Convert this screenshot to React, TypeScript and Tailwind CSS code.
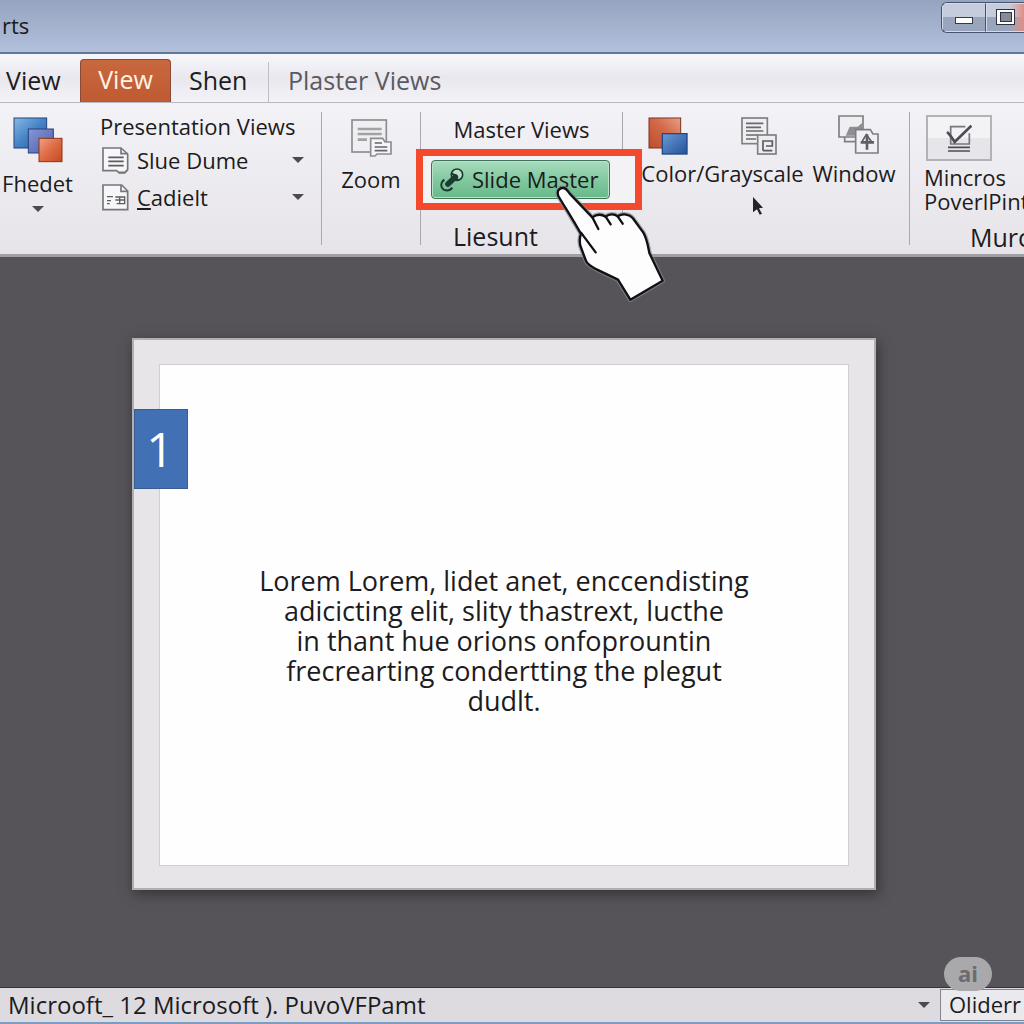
import React, { useState } from 'react';

const Caret = ({ className = '' }: { className?: string }) => (
  <svg viewBox="0 0 12 8" className={`h-2 w-3 shrink-0 ${className}`} aria-hidden="true">
    <path d="M0 1h12L6 7z" fill="#4b4a50" />
  </svg>
);

const Divider = () => <div className="my-[9px] w-px shrink-0 bg-[#a9a8ae]" />;

const SquaresIcon = () => (
  <svg viewBox="0 0 150 138" className="h-[46px] w-[50px]" aria-hidden="true">
    <defs>
      <linearGradient id="blue" x1="0" y1="0" x2="1" y2="1">
        <stop offset="0" stopColor="#8ab8e4" />
        <stop offset="0.5" stopColor="#4583c6" />
        <stop offset="1" stopColor="#235aa2" />
      </linearGradient>
      <linearGradient id="violet" x1="0" y1="0" x2="1" y2="1">
        <stop offset="0" stopColor="#8798d6" />
        <stop offset="1" stopColor="#4a5cab" />
      </linearGradient>
      <linearGradient id="orange" x1="0" y1="0" x2="1" y2="1">
        <stop offset="0" stopColor="#f0a182" />
        <stop offset="0.5" stopColor="#de6b45" />
        <stop offset="1" stopColor="#c24a22" />
      </linearGradient>
    </defs>
    <rect x="3" y="3" width="98" height="90" fill="url(#blue)" stroke="#1f4478" strokeWidth="3" />
    <rect x="46" y="36" width="75" height="72" fill="url(#violet)" stroke="#2b3f78" strokeWidth="3" />
    <rect x="78" y="64" width="69" height="70" fill="url(#orange)" stroke="#8c3418" strokeWidth="3" />
  </svg>
);

const PageIcon = ({ framed }: { framed?: boolean }) => (
  <svg viewBox="0 0 81 81" className="h-[27px] w-[27px] shrink-0" fill="none" stroke="#77767c" strokeWidth="5" aria-hidden="true">
    {framed ? (
      <>
        <path d="M3 3h56l18 18v56H3z" fill="#f7f7f9" />
        <path d="M57 3v19h20" />
        <path d="M15 38h18M15 50h12M15 59h8M40 39h28v20H44M40 48h28M53 39v20" stroke="#5e5d63" strokeWidth="4" />
      </>
    ) : (
      <>
        <path d="M3 3h54l20 18v47l-7 8H50l-6-5H3z" fill="#f7f7f9" />
        <path d="M57 3v17h20M50 78h17l9-9" />
        <path d="M19 31h46M19 43h46M19 56h46" stroke="#5e5d63" />
      </>
    )}
  </svg>
);

const ZoomIcon = () => (
  <svg viewBox="0 0 123 114" className="h-[38px] w-[41px]" fill="none" stroke="#8d8c92" strokeWidth="5" aria-hidden="true">
    <rect x="3" y="3" width="103" height="96" fill="#efeff1" />
    <path d="M20 30h72M20 45h72M20 62h28" strokeWidth="8" stroke="#a2a1a6" />
    <path d="M59 58h36l7 11h18v36H78l-6 6H59z" fill="#f5f5f7" />
    <path d="M71 72h22M71 84h38M71 95h38" stroke="#66656b" />
  </svg>
);

const ColorIcon = () => (
  <svg viewBox="0 0 120 114" className="h-[38px] w-10" aria-hidden="true">
    <defs>
      <linearGradient id="rust" x1="0" y1="1" x2="1" y2="0">
        <stop offset="0" stopColor="#bd4d2c" />
        <stop offset="0.55" stopColor="#d2694a" />
        <stop offset="1" stopColor="#eaa086" />
      </linearGradient>
      <linearGradient id="steel" x1="0" y1="0" x2="1" y2="1">
        <stop offset="0" stopColor="#6c9bd8" />
        <stop offset="1" stopColor="#235199" />
      </linearGradient>
    </defs>
    <rect x="3" y="3" width="95" height="90" fill="url(#rust)" stroke="#7c3220" strokeWidth="3" />
    <rect x="43" y="50" width="74" height="61" fill="url(#steel)" stroke="#214984" strokeWidth="4" />
  </svg>
);

const GrayscaleIcon = () => (
  <svg viewBox="0 0 108 114" className="h-[38px] w-9" fill="none" stroke="#7f7e84" strokeWidth="5" aria-hidden="true">
    <rect x="3" y="3" width="76" height="77" fill="#efeff1" />
    <path d="M15 19h52M15 31h45M15 42h52M15 54h38M15 66h30" stroke="#6a696f" />
    <rect x="50" y="54" width="55" height="57" fill="#ededf0" />
    <path d="M66 101V72h28v15H75M66 101h28" stroke="#5b5a60" />
  </svg>
);

const WindowIcon = () => (
  <svg viewBox="0 0 123 117" className="h-[39px] w-[41px]" fill="none" stroke="#7f7e84" strokeWidth="5" aria-hidden="true">
    <path d="M20 66v14h34M3 3h72v63H3z" fill="#efeff1" />
    <path d="M23 62l12-27h24l14-12v39z" fill="#8f8e94" stroke="none" />
    <path d="M53 44h44l8 13h15v57H53z" fill="#f0f0f2" />
    <path d="M87 104V58M68 82h40" stroke="#5f5e64" strokeWidth="8" />
    <path d="M73 78l12-19 17 23" stroke="#5f5e64" />
  </svg>
);

const CheckIcon = () => (
  <svg viewBox="0 0 78 84" className="h-7 w-[26px]" fill="none" stroke="#4d4c52" strokeWidth="5" aria-hidden="true">
    <path d="M58 8H14v52h56V28" stroke="#77767c" />
    <path d="M3 24c8 6 14 16 23 30L76 5" strokeWidth="8" />
    <path d="M6 70h66M6 81h66" />
  </svg>
);

const KeyIcon = () => (
  <svg viewBox="0 0 72 72" className="h-6 w-6 shrink-0" fill="none" stroke="#1d3b30" strokeWidth="5" aria-hidden="true">
    <circle cx="51" cy="20" r="17" fill="#b9e2cb" />
    <path d="M46 27L24 48" strokeWidth="17" strokeLinecap="round" />
    <path d="M33 16c4 4 12 2 14 8s4 11 8 12" strokeWidth="6" />
    <path d="M13 35C1 44 1 59 11 65c11 5 20 2 26-6" strokeWidth="6" />
  </svg>
);

const HandPointer = () => (
  <svg
    viewBox="702 252 336 366"
    className="pointer-events-none absolute left-[131px] top-[28px] h-[122px] w-28"
    stroke="#111014"
    strokeWidth="7"
    strokeLinecap="round"
    strokeLinejoin="round"
    aria-hidden="true"
  >
    <path
      d="M715 288C709 270 720 263 732 264C740 266 744 274 749 281L817 352C829 343 844 342 857 350C868 341 883 341 893 349C908 339 929 343 938 354L970 398C981 416 984 438 988 459L1028 542L931 599L894 539L836 511C812 500 800 492 797 480L781 437C778 421 779 411 783 402C761 362 735 322 715 288Z"
      fill="#a6a5a9"
      stroke="#8b8a8e"
      strokeWidth="14"
      opacity="0.7"
    />
    <path
      d="M715 288C709 270 720 263 732 264C740 266 744 274 749 281L817 352C829 343 844 342 857 350C868 341 883 341 893 349C908 339 929 343 938 354L970 398C981 416 984 438 988 459L1028 542L931 599L894 539L836 511C812 500 800 492 797 480L781 437C778 421 779 411 783 402C761 362 735 322 715 288Z"
      fill="#fdfdfe"
    />
    <path d="M783 398L827 457M817 352L835 387M857 350L872 373M893 349L908 371" fill="none" />
  </svg>
);

const ArrowPointer = () => (
  <svg viewBox="0 0 30 54" className="pointer-events-none absolute left-[130px] top-[94px] h-[18px] w-[10px]" aria-hidden="true">
    <path d="M0 0L30 32L18 34L27 50L20 53L12 37L0 46z" fill="#242328" />
  </svg>
);

const tabs = ['View', 'View', 'Shen', 'Plaster Views'];

const tabStyles = [
  'w-20 pl-1.5 text-left text-[#1c1b20]',
  'w-[91px] text-center',
  'w-[97px] pl-[18px] text-left text-[#1c1b20]',
  'pl-[19px] border-l border-[#c0bfc9] text-left text-[#5b5a62]',
];

const App = () => {
  const [activeTab, setActiveTab] = useState(1);

  return (
    <div className="flex min-h-screen flex-col overflow-hidden bg-[#565458] font-['Open_Sans','Noto_Sans',sans-serif] text-[22px] leading-6 text-[#1c1b20]">
      {/* title bar */}
      <header className="flex h-[54px] items-start justify-between border-b-2 border-[#5f7898] bg-linear-to-b from-[#97a4c1] to-[#b3c0dc]">
        <span className="pl-0.5 pt-[13px]">rts</span>
        <div className="mt-0.5 flex h-[31px] w-[83px] overflow-hidden rounded-l-md border border-r-0 border-[#46536e] bg-linear-to-b from-[#c5ccdb] from-50% to-[#98a5bd] to-50%">
          <button aria-label="Minimize" className="flex w-11 shrink-0 items-end justify-center border border-[#d4dbe8] border-r-[#46536e] pb-[7px]">
            <span className="h-[7px] w-[18px] border border-[#333a4c] bg-white" />
          </button>
          <button aria-label="Restore" className="flex flex-1 items-start justify-center border border-r-0 border-[#d4dbe8] bg-linear-to-r from-transparent from-60% to-[#e08f85] pt-[5px]">
            <span className="flex h-4 w-[19px] items-center justify-center border border-[#2d3242] bg-white">
              <span className="h-2.5 w-3 border border-[#2d3242] bg-[#878b98]" />
            </span>
          </button>
        </div>
      </header>

      {/* tabs */}
      <nav className="flex h-[49px] items-end border-b border-[#b9b8c2] bg-linear-to-b from-[#f6f6fb] via-[#e9e8ee] to-[#f3f2f7] text-[25px]">
        {tabs.map((tab, index) => (
          <button
            key={index}
            onClick={() => setActiveTab(index)}
            className={`${tabStyles[index]} whitespace-nowrap pb-1 ${
              activeTab === index
                ? 'h-[43px] rounded-t border border-b-0 border-[#8a4a34] bg-linear-to-b from-[#c8683f] to-[#bf5a31] font-medium text-[#fff3e6]'
                : 'h-10'
            }`}
          >
            {tab}
          </button>
        ))}
      </nav>

      {/* ribbon */}
      <section className="relative z-10 flex h-[154px] border-b-[3px] border-[#a09fa3] bg-linear-to-b from-[#f3f2f6] to-[#e6e4e8]">
        <div className="flex w-[321px] shrink-0">
          <button className="flex w-[75px] flex-col items-center pt-3.5">
            <SquaresIcon />
            <span className="mt-2">Fhedet</span>
            <Caret className="mt-2.5" />
          </button>
          <div className="flex flex-1 flex-col pl-[25px] pt-[11px]">
            <span className="whitespace-nowrap">Presentation Views</span>
            <button className="mt-2 flex h-7 items-center pl-0.5 pr-[17px]">
              <PageIcon />
              <span className="ml-2 flex-1 text-left">Slue Dume</span>
              <Caret />
            </button>
            <button className="mt-[9px] flex h-7 items-center pl-0.5 pr-[17px]">
              <PageIcon framed />
              <span className="ml-2 flex-1 text-left">
                <span className="underline decoration-2 underline-offset-2">C</span>adielt
              </span>
              <Caret />
            </button>
          </div>
        </div>
        <Divider />
        <button className="flex w-[98px] shrink-0 flex-col items-center pt-4">
          <ZoomIcon />
          <span className="mt-2.5">Zoom</span>
        </button>
        <Divider />
        <div className="flex w-[201px] shrink-0 flex-col pt-[14px]">
          <span className="text-center">Master Views</span>
          <div className="relative z-10 -ml-[5px] -mr-5 mt-2 border-[7px] border-[#f4492c] bg-[#f3f2f5] px-2 py-1">
            <button className="flex h-[39px] w-[179px] items-center gap-2 whitespace-nowrap rounded border border-[#3d7159] bg-linear-to-b from-[#a9dcbe] via-[#82c9a0] to-[#67b98a] pl-2 shadow-[inset_0_0_0_1px_#b8e3ca]">
              <KeyIcon />
              <span className="pb-0.5">Slide Master</span>
            </button>
            <HandPointer />
          </div>
          <span className="mt-3.5 pl-8 text-[25px]">Liesunt</span>
        </div>
        <Divider />
        <div className="relative flex w-[286px] shrink-0 whitespace-nowrap">
          <button className="flex w-[182px] flex-col pl-[17px] pt-3.5">
            <span className="flex gap-[53px] pl-2">
              <ColorIcon />
              <GrayscaleIcon />
            </span>
            <span className="mt-1.5">Color/Grayscale</span>
          </button>
          <button className="flex w-[98px] flex-col items-center pt-3">
            <span className="pl-2">
              <WindowIcon />
            </span>
            <span className="mt-[7px]">Window</span>
          </button>
          <ArrowPointer />
        </div>
        <Divider />
        <div className="flex min-w-0 flex-1 flex-col overflow-hidden whitespace-nowrap pl-3.5 pt-3">
          <button className="flex flex-col text-left">
            <span className="ml-0.5 flex h-[46px] w-[66px] items-center justify-center border-2 border-[#b3b2b7] bg-linear-to-b from-[#f3f2f5] from-50% to-[#e6e5e9] to-50%">
              <CheckIcon />
            </span>
            <span className="mt-1">Mincros</span>
            <span>PoverlPint</span>
          </button>
          <span className="mt-3 pl-[46px] text-[25px]">Murc</span>
        </div>
      </section>

      {/* slide */}
      <main className="flex flex-1 flex-col pb-[97px] pl-[132px] pr-[148px] pt-[81px]">
        <div className="relative flex w-full flex-1 border-2 border-[#b0afb3] bg-[#e7e5e8] px-[25px] pb-[22px] pt-6 shadow-[2px_4px_12px_#353337]">
          <div className="flex flex-1 items-center justify-center border border-[#cfced2] bg-[#fefefe] pt-[52px]">
            <p className="text-center text-[27px] leading-[30px]">
              Lorem Lorem, lidet anet, enccendisting
              <br />
              adicicting elit, slity thastrext, lucthe
              <br />
              in thant hue orions onfoprountin
              <br />
              frecrearting condertting the plegut
              <br />
              dudlt.
            </p>
          </div>
          <div className="absolute left-0 top-[69px] flex h-20 w-[54px] items-center justify-center border border-[#3b5c92] bg-[#4170b4] pr-0.5 text-5xl font-medium text-white">
            1
          </div>
        </div>
      </main>

      {/* status bar */}
      <footer className="relative flex h-[37px] items-center border-b-2 border-t border-b-[#7d9cc4] border-t-[#343237] bg-[#dddbe0] text-2xl">
        <span className="flex-1 whitespace-nowrap pl-2">Microoft_ 12 Microsoft ). PuvoVFPamt</span>
        <Caret className="mr-2.5" />
        <button className="h-8 w-[84px] overflow-hidden whitespace-nowrap border border-r-0 border-[#85848c] bg-[#eae9ed] pl-2 text-left text-[22px]">
          Oliderr
        </button>
        <span className="absolute -top-[31px] right-8 flex h-[34px] w-12 items-center justify-center rounded-full bg-[#a9a8ab] text-[22px] font-bold text-[#6d6b70]">
          ai
        </span>
      </footer>
    </div>
  );
};

export default App;
